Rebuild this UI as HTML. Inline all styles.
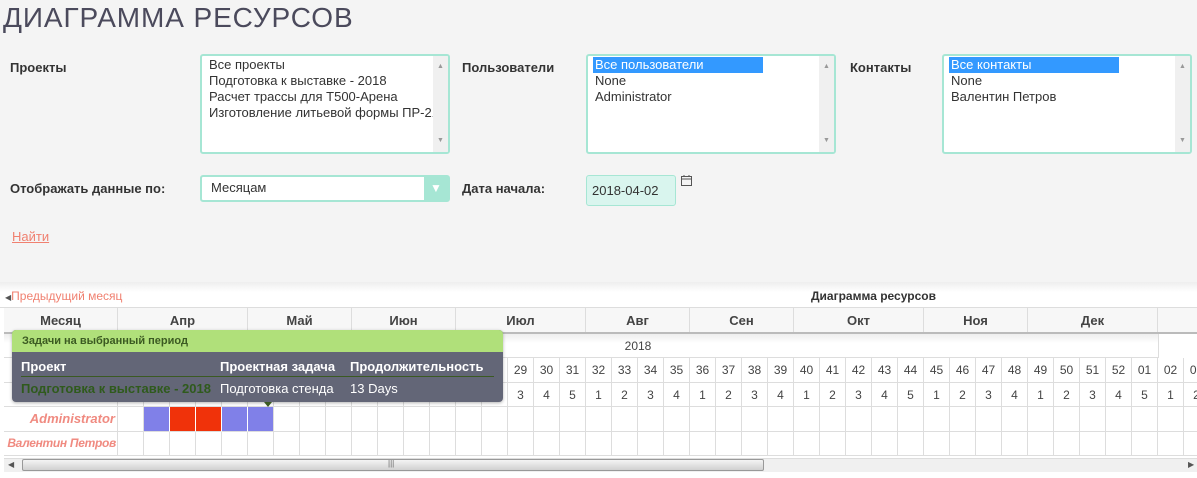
<!DOCTYPE html>
<html><head><meta charset="utf-8"><style>
*{box-sizing:border-box;margin:0;padding:0}
body{width:1197px;height:478px;overflow:hidden;background:#f4f4f4;font-family:"Liberation Sans",sans-serif;position:relative;color:#444}
.a{position:absolute}
h1{position:absolute;left:3px;top:2px;font-size:28px;font-weight:normal;letter-spacing:0.9px;color:#4b4a5c}
.lbl{position:absolute;font-size:13px;font-weight:bold;color:#333}
.lb{position:absolute;background:#fff;border:2px solid #a6e6d4;border-radius:3px;font-size:13px;color:#333;padding:1px 0 0 7px;line-height:16px;overflow:hidden;white-space:nowrap}
.sel{background:#3399ff;color:#fff;display:block;margin-left:-2px;padding-left:2px;width:170px}
.sb{position:absolute;right:0;top:0;bottom:0;width:15px;background:#f0f0f0;font-size:7px;color:#999;text-align:center}
.chart{position:absolute;left:0;top:282px;width:1197px;height:196px;background:#fff}
.row{position:absolute;left:4px;display:flex;height:25px}
.c{width:26px;flex:none;border-right:1px solid #ddd;border-bottom:1px solid #ddd;font-size:12px;text-align:center;line-height:24px;color:#444}
.h{width:114px;flex:none;border-right:1px solid #ddd;border-bottom:1px solid #ddd}
.m{flex:none;border-right:1px solid #ddd;font-size:13px;font-weight:bold;text-align:center;line-height:25px;color:#444;background:#f7f7f7}
</style></head><body>
<h1>ДИАГРАММА РЕСУРСОВ</h1>
<div class="lbl" style="left:10px;top:60px">Проекты</div>
<div class="lb" style="left:200px;top:54px;width:250px;height:100px">Все проекты<br>Подготовка к выставке - 2018<br>Расчет трассы для Т500-Арена<br>Изготовление литьевой формы ПР-21<div class="sb"><div style="margin-top:3px">▲</div><div style="position:absolute;bottom:3px;width:15px">▼</div></div></div>
<div class="lbl" style="left:462px;top:60px">Пользователи</div>
<div class="lb" style="left:586px;top:54px;width:250px;height:100px"><span class="sel">Все пользователи</span>None<br>Administrator<div class="sb"><div style="margin-top:3px">▲</div><div style="position:absolute;bottom:3px;width:15px">▼</div></div></div>
<div class="lbl" style="left:850px;top:60px">Контакты</div>
<div class="lb" style="left:942px;top:54px;width:250px;height:100px"><span class="sel">Все контакты</span>None<br>Валентин Петров<div class="sb"><div style="margin-top:3px">▲</div><div style="position:absolute;bottom:3px;width:15px">▼</div></div></div>
<div class="lbl" style="left:10px;top:181px">Отображать данные по:</div>
<div class="a" style="left:200px;top:175px;width:250px;height:27px;background:#fff;border:2px solid #a6e6d4;border-radius:3px;font-size:13px;color:#333;padding:3px 0 0 9px">Месяцам<div class="a" style="right:0;top:0;width:24px;height:23px;background:#a6e6d4;color:#fff;font-size:12px;text-align:center;line-height:23px">▼</div></div>
<div class="lbl" style="left:462px;top:181px">Дата начала:</div>
<div class="a" style="left:586px;top:175px;width:90px;height:31px;background:#d9f5ee;border:1px solid #a6e6d4;border-radius:3px;font-size:13px;color:#333;padding:7px 0 0 5px">2018-04-02</div>
<svg class="a" style="left:680px;top:174px" width="13" height="13" viewBox="0 0 13 13"><rect x="1.5" y="2.5" width="10" height="9" fill="none" stroke="#555"/><line x1="1.5" y1="5" x2="11.5" y2="5" stroke="#555"/><line x1="4" y1="1" x2="4" y2="3" stroke="#555"/><line x1="9" y1="1" x2="9" y2="3" stroke="#555"/></svg>
<div class="a" style="left:12px;top:229px;font-size:13px;color:#f08070;text-decoration:underline">Найти</div>
<div class="chart">
<div class="a" style="left:0;top:0;width:1197px;height:26px;background:linear-gradient(#eee,#fff 40%);border-bottom:1px solid #ddd"></div>
<div class="a" style="left:5px;top:7px;font-size:12px;color:#f08070"><span style="color:#555;font-size:8px">◀</span>Предыдущий месяц</div>
<div class="a" style="left:811px;top:7px;font-size:12px;font-weight:bold;color:#333">Диаграмма ресурсов</div>
<div class="row" style="top:26px;border-bottom:2px solid #bbb;height:26px">
<div class="m" style="width:114px">Месяц</div><div class="m" style="width:130px">Апр</div><div class="m" style="width:104px">Май</div><div class="m" style="width:104px">Июн</div><div class="m" style="width:130px">Июл</div><div class="m" style="width:104px">Авг</div><div class="m" style="width:104px">Сен</div><div class="m" style="width:130px">Окт</div><div class="m" style="width:104px">Ноя</div><div class="m" style="width:130px">Дек</div><div class="m" style="width:60px"></div></div>
<div class="row" style="top:52px;height:24px;background:linear-gradient(#eee,#fff 40%);border-bottom:1px solid #ddd"><div style="width:114px"></div><div style="width:1041px;border-right:1px solid #ddd;text-align:center;font-size:12px;line-height:24px;color:#444">2018</div></div>
<div class="row" style="top:76px"><div class="h"></div><div class="c">14</div><div class="c">15</div><div class="c">16</div><div class="c">17</div><div class="c">18</div><div class="c">19</div><div class="c">20</div><div class="c">21</div><div class="c">22</div><div class="c">23</div><div class="c">24</div><div class="c">25</div><div class="c">26</div><div class="c">27</div><div class="c">28</div><div class="c">29</div><div class="c">30</div><div class="c">31</div><div class="c">32</div><div class="c">33</div><div class="c">34</div><div class="c">35</div><div class="c">36</div><div class="c">37</div><div class="c">38</div><div class="c">39</div><div class="c">40</div><div class="c">41</div><div class="c">42</div><div class="c">43</div><div class="c">44</div><div class="c">45</div><div class="c">46</div><div class="c">47</div><div class="c">48</div><div class="c">49</div><div class="c">50</div><div class="c">51</div><div class="c">52</div><div class="c">01</div><div class="c">02</div><div class="c">03</div></div>
<div class="row" style="top:101px;height:24px"><div class="h"></div><div class="c">1</div><div class="c">2</div><div class="c">3</div><div class="c">4</div><div class="c">5</div><div class="c">1</div><div class="c">2</div><div class="c">3</div><div class="c">4</div><div class="c">1</div><div class="c">2</div><div class="c">3</div><div class="c">4</div><div class="c">1</div><div class="c">2</div><div class="c">3</div><div class="c">4</div><div class="c">5</div><div class="c">1</div><div class="c">2</div><div class="c">3</div><div class="c">4</div><div class="c">1</div><div class="c">2</div><div class="c">3</div><div class="c">4</div><div class="c">1</div><div class="c">2</div><div class="c">3</div><div class="c">4</div><div class="c">5</div><div class="c">1</div><div class="c">2</div><div class="c">3</div><div class="c">4</div><div class="c">1</div><div class="c">2</div><div class="c">3</div><div class="c">4</div><div class="c">5</div><div class="c">1</div><div class="c">2</div></div>
<div class="row" style="top:125px"><div class="h" style="text-align:right;padding-right:2px;font:italic bold 13px 'Liberation Sans',sans-serif;color:#f08a80;line-height:24px">Administrator</div><div class="c"></div><div class="c" style="background:#8080e8;border-right-color:#fff"></div><div class="c" style="background:#f0320a;border-right-color:#fff"></div><div class="c" style="background:#f0320a;border-right-color:#fff"></div><div class="c" style="background:#8080e8;border-right-color:#fff"></div><div class="c" style="background:#8080e8"></div><div class="c"></div><div class="c"></div><div class="c"></div><div class="c"></div><div class="c"></div><div class="c"></div><div class="c"></div><div class="c"></div><div class="c"></div><div class="c"></div><div class="c"></div><div class="c"></div><div class="c"></div><div class="c"></div><div class="c"></div><div class="c"></div><div class="c"></div><div class="c"></div><div class="c"></div><div class="c"></div><div class="c"></div><div class="c"></div><div class="c"></div><div class="c"></div><div class="c"></div><div class="c"></div><div class="c"></div><div class="c"></div><div class="c"></div><div class="c"></div><div class="c"></div><div class="c"></div><div class="c"></div><div class="c"></div><div class="c"></div><div class="c"></div></div>
<div class="row" style="top:150px;height:24px"><div class="h" style="text-align:right;padding-right:1px;font:italic bold 12px 'Liberation Sans',sans-serif;letter-spacing:-0.3px;color:#f08a80;line-height:23px;white-space:nowrap;overflow:hidden">Валентин Петров</div><div class="c"></div><div class="c"></div><div class="c"></div><div class="c"></div><div class="c"></div><div class="c"></div><div class="c"></div><div class="c"></div><div class="c"></div><div class="c"></div><div class="c"></div><div class="c"></div><div class="c"></div><div class="c"></div><div class="c"></div><div class="c"></div><div class="c"></div><div class="c"></div><div class="c"></div><div class="c"></div><div class="c"></div><div class="c"></div><div class="c"></div><div class="c"></div><div class="c"></div><div class="c"></div><div class="c"></div><div class="c"></div><div class="c"></div><div class="c"></div><div class="c"></div><div class="c"></div><div class="c"></div><div class="c"></div><div class="c"></div><div class="c"></div><div class="c"></div><div class="c"></div><div class="c"></div><div class="c"></div><div class="c"></div><div class="c"></div></div>
<div class="a" style="left:4px;top:176px;width:1193px;height:14px;background:#f0f0f0;border-top:1px solid #ddd"></div>
<div class="a" style="left:8px;top:178px;font-size:8px;color:#555">◀</div>
<div class="a" style="left:22px;top:177px;width:742px;height:12px;border:1px solid #999;border-radius:2px;background:linear-gradient(#f4f4f4,#d0d0d0)"></div>
<div class="a" style="left:388px;top:177px;font-size:8px;color:#666">|||</div>
<div class="a" style="left:1188px;top:178px;font-size:8px;color:#555">▶</div>
<div class="a" style="left:12px;top:48px;width:491px;height:72px;border-radius:4px;background:#636677;box-shadow:0 1px 3px rgba(0,0,0,.3);overflow:visible">
<div style="height:22px;background:#b0e07a;border-radius:4px 4px 0 0;font-size:11px;font-weight:bold;color:#3b5a22;padding:5px 0 0 10px">Задачи на выбранный период</div>
<div class="a" style="left:9px;top:29px;font-size:13px;font-weight:bold;color:#fff">Проект</div>
<div class="a" style="left:208px;top:29px;font-size:13px;font-weight:bold;color:#fff">Проектная задача</div>
<div class="a" style="left:338px;top:29px;font-size:13px;font-weight:bold;color:#fff">Продолжительность</div>
<div class="a" style="left:9px;top:46px;width:473px;border-top:1px solid #3b5a22"></div>
<div class="a" style="left:9px;top:51px;font-size:13px;font-weight:bold;color:#2f5a1c">Подготовка к выставке - 2018</div>
<div class="a" style="left:208px;top:51px;font-size:13px;color:#fff">Подготовка стенда</div>
<div class="a" style="left:338px;top:51px;font-size:13px;color:#fff">13 Days</div>
<div class="a" style="left:252px;top:72px;width:0;height:0;border-left:4px solid transparent;border-right:4px solid transparent;border-top:5px solid #3b5a22"></div>
</div>
</div>
</body></html>
